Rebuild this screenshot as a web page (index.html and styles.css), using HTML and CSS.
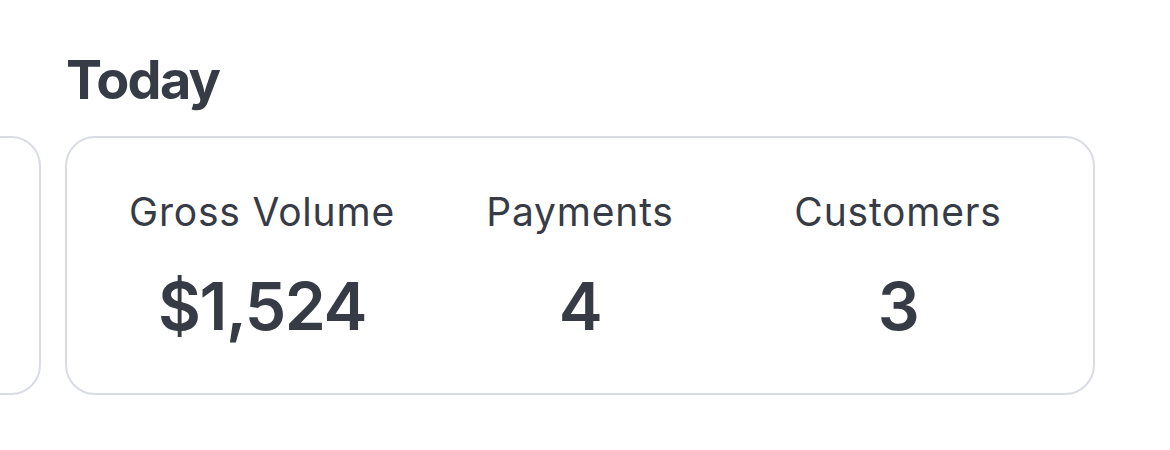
FILE: index.html
```html
<!DOCTYPE html>
<html lang="en">
<head>
<meta charset="utf-8">
<title>Today</title>
<link rel="stylesheet" href="styles.css">
</head>
<body>
<section class="today">
  <h2 class="title">Today</h2>
  <div class="track">
    <div class="card card-prev"></div>
    <div class="card">
      <div class="stat">
        <div class="label">Gross Volume</div>
        <div class="value">$1,524</div>
      </div>
      <div class="stat">
        <div class="label">Payments</div>
        <div class="value">4</div>
      </div>
      <div class="stat">
        <div class="label">Customers</div>
        <div class="value">3</div>
      </div>
    </div>
  </div>
</section>
</body>
</html>
```

FILE: styles.css
```css
html, body {
  margin: 0;
  padding: 0;
  background: #ffffff;
}

body {
  width: 1170px;
  height: 450px;
  overflow: hidden;
  font-family: Inter, "Noto Sans", "Liberation Sans", sans-serif;
  color: #373b45;
}

.today {
  padding-top: 47px;
}

.title {
  margin: 0 0 24px 0;
  padding-left: 66px;
  font-size: 54px;
  font-weight: 700;
  line-height: normal;
  letter-spacing: -1.7px;
}

.track {
  display: flex;
  gap: 24px;
  margin-left: -989px;
}

.card {
  flex: 0 0 1030px;
  box-sizing: border-box;
  border: 2px solid #d9dde3;
  border-radius: 30px;
  padding: 50px 36px 47px;
  display: grid;
  grid-template-columns: 1fr 1fr 1fr;
  min-height: 259px;
}

.stat {
  display: flex;
  flex-direction: column;
  align-items: center;
  gap: 31px;
}

.label {
  font-size: 39px;
  font-weight: 400;
  line-height: normal;
  letter-spacing: 0.8px;
}

.value {
  font-size: 66px;
  font-weight: 600;
  line-height: normal;
  letter-spacing: -1.5px;
}
```
